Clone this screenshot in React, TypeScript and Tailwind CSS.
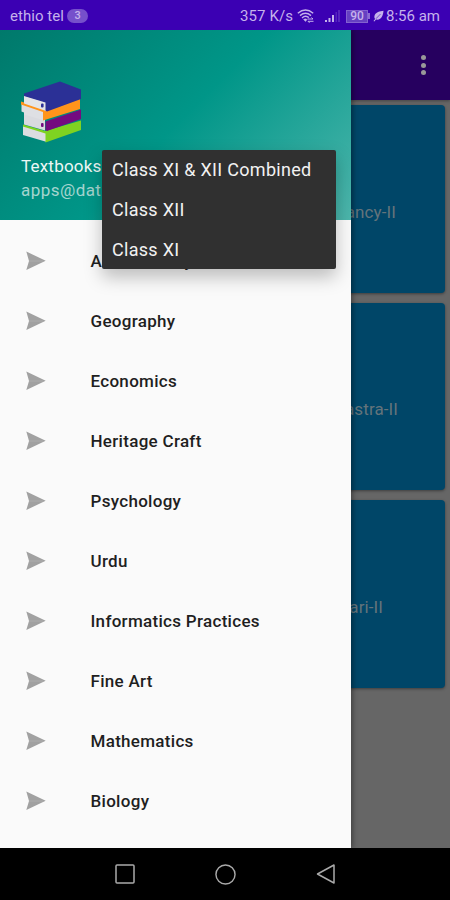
import React from 'react'

const subjects = [
  'Accountancy',
  'Geography',
  'Economics',
  'Heritage Craft',
  'Psychology',
  'Urdu',
  'Informatics Practices',
  'Fine Art',
  'Mathematics',
  'Biology',
]

const classes = ['Class XI & XII Combined', 'Class XII', 'Class XI']

const books = [
  { title: 'Accountancy-II', className: 'pr-[49px]' },
  { title: 'Arthashastra-II', className: 'pr-[47px]' },
  { title: 'ari-II', className: 'pr-[62px]' },
]

function StatusBar() {
  return (
    <header className="flex h-[30px] shrink-0 items-center justify-between bg-[#3b00b3] pr-[10px] pl-[10px] pt-[2px] text-[15px] text-[#c5b2eb]">
      <div className="flex items-center gap-[3px]">
        <span className="tracking-[0.05px]">ethio tel</span>
        <span className="flex h-[14px] w-[21px] items-center justify-center rounded-full bg-[#7650cb] text-[11px] font-medium">
          3
        </span>
      </div>
      <div className="flex items-center">
        <span className="tracking-[0.1px]">357 K/s</span>
        <svg className="ml-[4px] h-[16px] w-[18px]" viewBox="0 0 18 16" fill="none" stroke="currentColor" strokeWidth="1.4">
          <path d="M.8 5.2Q8.5-1.4 16.2 5.2M3 7.6Q8.5 3 14 7.6M5 9.9Q8.5 6.7 11.8 9.6" />
          <path d="M6.5 11.4 8.5 13.6 10.2 11.6Q8.5 10.2 6.5 11.4Z" fill="currentColor" strokeWidth=".4" />
          <path d="M10.5 11h5.5l-1.5-1.5M16.5 13.3H11l1.5 1.5" strokeWidth="1" />
        </svg>
        <svg className="ml-[9px] h-[14px] w-[17px]" viewBox="0 0 17 14" fill="currentColor">
          <path d="M1 11h2v2H1zM4.5 9h2v4h-2zM8 6h2v7H8z" />
          <path d="M11.5 3h1.5v10h-1.5zM14 1h2v12h-2z" opacity=".2" />
        </svg>
        <div className="ml-[5px] flex h-[13px] w-[22px] items-center justify-center border border-[#8361d0] bg-[#6640c2] text-[12px] font-medium leading-none">
          90
        </div>
        <span className="h-[6px] w-[2px] bg-[#8b6bd4]" />
        <svg className="ml-[3px] h-[12px] w-[11px]" viewBox="0 0 11 12" fill="currentColor">
          <path d="M10.5.8C7 1.3 2.5 2.2 1.5 5.7c-.4 1.2 0 2.5.6 3.2L.5 11l.8.4L3 9.6c5.5.9 7-4.1 7.5-8.8Z" />
          <path d="M3 8.7 7.5 4" stroke="#3b00b3" strokeWidth=".6" />
        </svg>
        <span className="ml-[2px]">8:56 am</span>
      </div>
    </header>
  )
}

function BooksIcon() {
  return (
    <svg className="h-[62px] w-[61px]" viewBox="0 0 61 62">
      {/* green */}
      <path d="M2 45 26 51V61L2 54Z" fill="#dcdde0" />
      <path d="M2 43.5 24 50 60 39.5V49L24.5 61.5V52.5L2 45.5Z" fill="#7fd321" />
      {/* purple */}
      <path d="M3 31 24 38V49.5L3 43.5Z" fill="#d9dadf" />
      <path d="M24.5 40.5 60 28.5V38L26 50L24.5 49Z" fill="#740a80" />
      {/* orange */}
      <path d="M.5 22 22 29V39L3 33.5V31.5L.5 30.5Z" fill="#dedfe3" />
      <path d="M0 20.5 22 27 59 18V28L22 39.5V31L0 23.5Z" fill="#ff941b" />
      {/* blue */}
      <path d="M3 14.5 25 21V30L3 22.5Z" fill="#e4e5e8" />
      <path d="M3 12.5 39 .5 60 8.5V18L26 30.5L24.5 29.5V21.5L3 15Z" fill="#2b3096" />
      <rect x="20" y="22.5" width="2.6" height="4" rx="1" fill="#2b3096" />
      <rect x="20" y="42" width="2.6" height="4" rx="1" fill="#740a80" />
    </svg>
  )
}

function Drawer() {
  return (
    <aside className="absolute inset-y-0 left-0 w-[351px] overflow-hidden bg-[#fafafa] shadow-[2px_0_5px_rgba(0,0,0,0.35)]">
      <div className="h-[190px] bg-[linear-gradient(135deg,#00796b_0%,#009688_50%,#4db6ac_100%)] pt-[51px] pl-[21px]">
        <BooksIcon />
        <p className="mt-[12px] text-[17px] leading-[22px] tracking-[0.2px] text-[#edf7f5]">Textbooks</p>
        <p className="mt-[2px] text-[17px] leading-[22px] tracking-[0.45px] text-[#a5d5cf]">apps@dat</p>
      </div>
      <nav className="mt-[11px]">
        {subjects.map((subject) => (
          <a key={subject} className="flex h-[60px] items-center pl-[26px]">
            <svg className="h-[20px] w-[20px]" viewBox="0 0 20 20">
              <path d="M.3.5 19.7 9.8 .3 19 3 10Z" fill="#a1a1a1" />
              <path d="M3 10H17" stroke="#adadad" />
            </svg>
            <span className="ml-[44.5px] pt-px text-[17px] font-medium tracking-[0.3px] text-[#1f1f1f]">{subject}</span>
          </a>
        ))}
      </nav>
    </aside>
  )
}

function ClassMenu() {
  return (
    <div className="absolute top-[120px] left-[102px] flex h-[119px] w-[234px] flex-col rounded-[2px] bg-[#303030] shadow-[0_8px_18px_rgba(0,0,0,0.25)]">
      {classes.map((item) => (
        <button key={item} className="flex h-10 items-center pl-[10px] text-left text-[18px] tracking-[0.3px] text-[#f2f2f2]">
          {item}
        </button>
      ))}
    </div>
  )
}

export default function App() {
  return (
    <div className="flex h-[900px] w-[450px] flex-col overflow-hidden font-['Roboto',sans-serif]">
      <StatusBar />
      <main className="relative flex-1 overflow-hidden bg-[#666]">
        <div className="flex h-[70px] items-center justify-end bg-[#26005f] pr-[24px] shadow-[0_1px_3px_rgba(0,0,0,0.35)]">
          <div className="flex flex-col gap-[2.5px]">
            <span className="size-[5px] rounded-full bg-[#999]" />
            <span className="size-[5px] rounded-full bg-[#999]" />
            <span className="size-[5px] rounded-full bg-[#999]" />
          </div>
        </div>
        <div className="flex flex-col items-end gap-[10px] pt-[5px] pr-[5px]">
          {books.map((book) => (
            <div
              key={book.title}
              className="flex h-[187.5px] w-[215px] items-center justify-end rounded-[4px] bg-[#004668] pt-[27px] shadow-[0_1px_3px_rgba(0,0,0,0.4)]"
            >
              <span className={`text-[17px] tracking-[0.1px] text-[#64747b] ${book.className}`}>{book.title}</span>
            </div>
          ))}
        </div>
        <Drawer />
        <ClassMenu />
      </main>
      <footer className="flex h-[52px] shrink-0 items-center justify-center gap-[80px] bg-black">
        <svg className="size-5" viewBox="0 0 20 20" fill="none" stroke="#aaa" strokeWidth="1.5">
          <rect x="1" y="1" width="18" height="18" rx="1" />
        </svg>
        <svg className="size-[21px]" viewBox="0 0 22 22" fill="none" stroke="#aaa" strokeWidth="1.5">
          <circle cx="11" cy="11" r="10" />
        </svg>
        <svg className="size-5" viewBox="0 0 20 20" fill="none" stroke="#aaa" strokeWidth="1.5" strokeLinejoin="round">
          <path d="M18 1V19L1.5 10Z" />
        </svg>
      </footer>
    </div>
  )
}
